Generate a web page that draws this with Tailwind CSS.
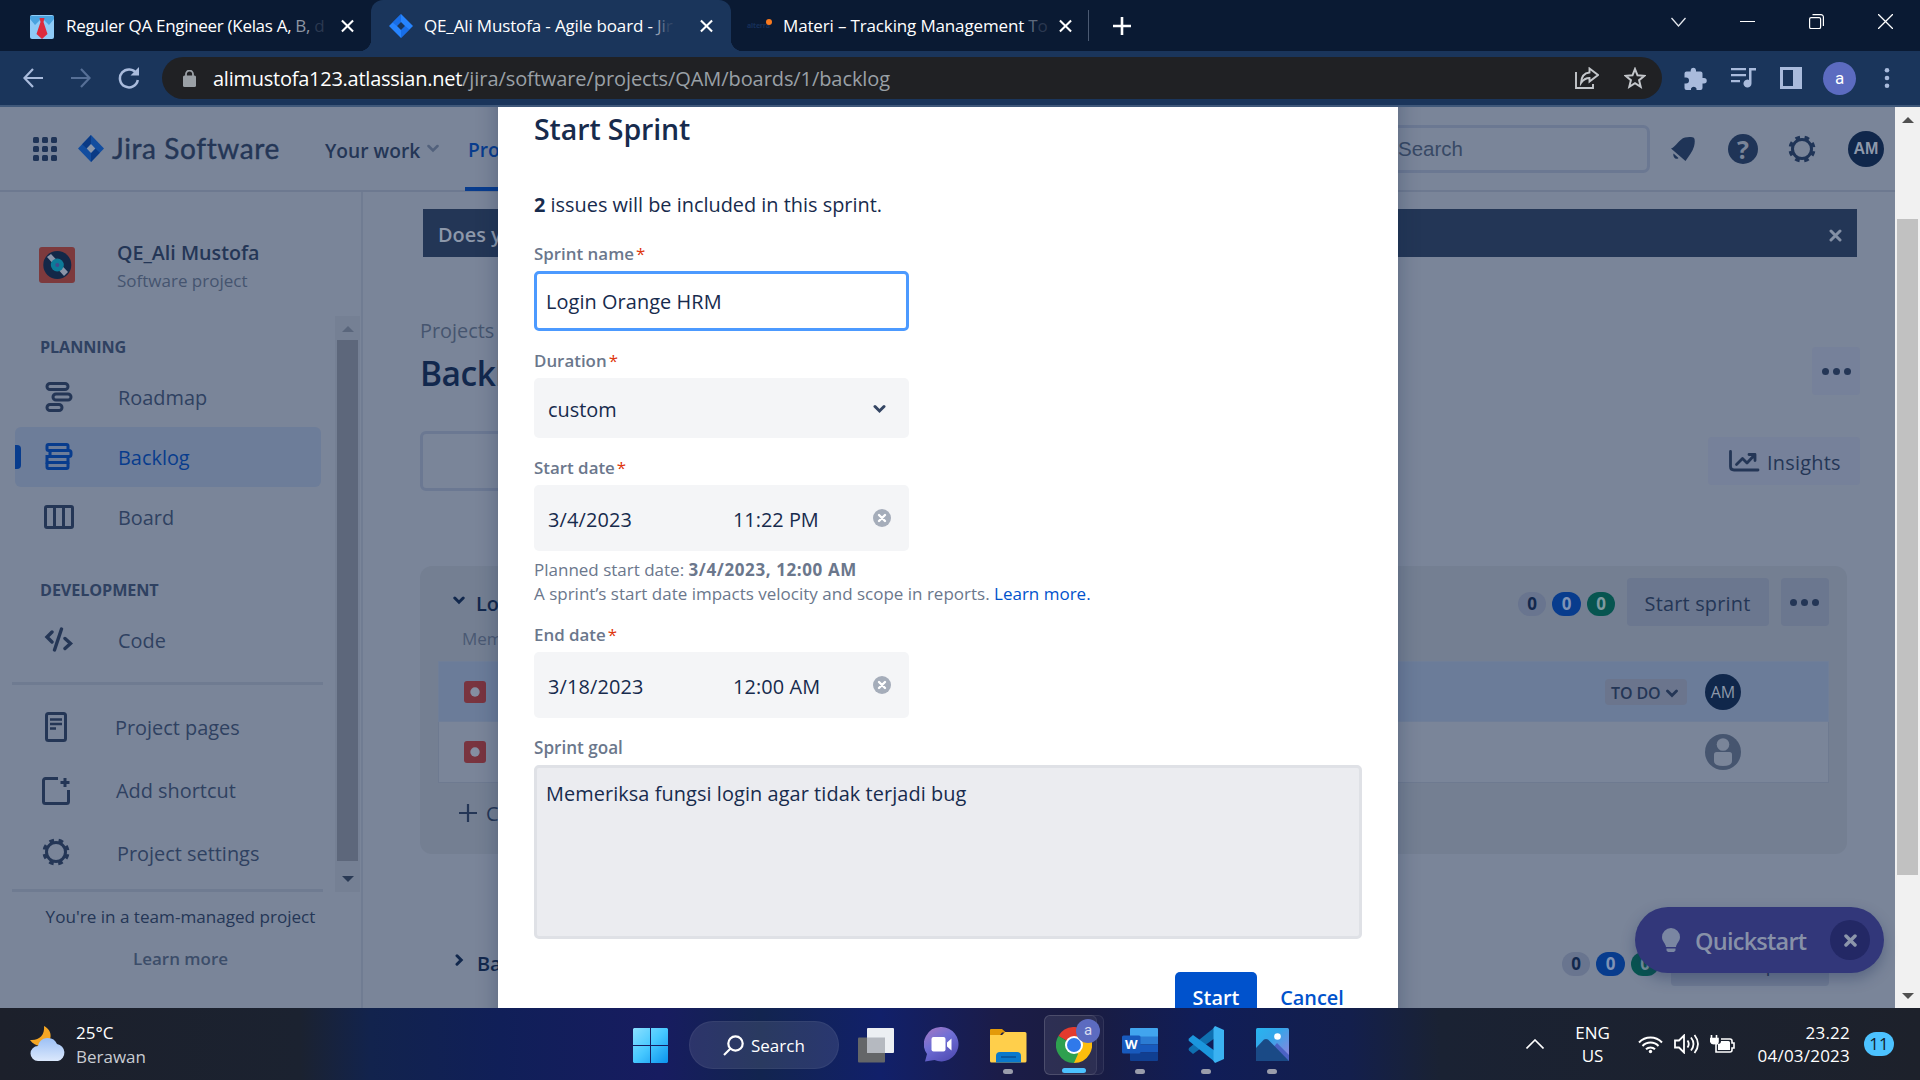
<!DOCTYPE html>
<html lang="en">
<head>
<meta charset="utf-8">
<title>QE_Ali Mustofa - Agile board - Jira</title>
<script src="https://cdn.jsdelivr.net/npm/@tailwindcss/browser@4"></script>
</head>
<body class="w-[1920px] h-[1080px] overflow-hidden font-['Open_Sans','Noto_Sans',sans-serif] text-[19.9px] leading-[24px] text-[#243656] whitespace-nowrap bg-[#7a8599]">
<div class="flex flex-col w-[1920px] h-[1080px] overflow-hidden">

<!-- tab strip -->
<header class="h-[51px] shrink-0 flex bg-[#0a1a33] text-white text-[17px]">
  <div class="w-[371px] flex items-center pl-[30px]">
    <svg class="w-6 h-6 mt-[2px]" viewBox="0 0 24 24"><rect width="24" height="24" rx="2" fill="#8fcbf7"/><path d="M0 1h24v3l-5 6-7-7-7 7-5-6z" fill="#4aa3df"/><path d="M9.500 3h5l-1 4 4 12-5.500 5-5.500-5 4-12z" fill="#dc2b3c"/></svg>
    <span class="ml-[12px] w-[263px] overflow-hidden tracking-[-0.3px]">Reguler QA Engineer (Kelas A, <span class="text-[#8d95a3]">B,</span> <span class="text-[#2b3850]">d</span></span>
    <svg class="w-[13px] h-[14px] ml-[12px]" viewBox="0 0 14 14" stroke="#fff" stroke-width="2.200"><path d="M1 1l12 12M13 1L1 13"/></svg>
  </div>
  <div class="w-[360px] flex items-center pl-[18px] bg-[#1a355b] rounded-t-xl relative">
    <i class="absolute -left-3 bottom-0 w-3 h-3 bg-[radial-gradient(circle_at_0_0,#0a1a33_12px,#1a355b_12.5px)]"></i>
    <i class="absolute -right-3 bottom-0 w-3 h-3 bg-[radial-gradient(circle_at_100%_0,#0a1a33_12px,#1a355b_12.5px)]"></i>
    <svg class="w-6 h-6" viewBox="0 0 24 24"><path d="M12 0l12 12-12 12L0 12z" fill="#2684ff"/><path d="M12 0v8l-4 4-4.500-3.500zM12 24v-8l4-4 4.500 3.500z" fill="#0f5fd8" opacity=".6"/><path d="M12 8l4 4-4 4-4-4z" fill="#1a355b"/></svg>
    <span class="ml-[11px] w-[265px] overflow-hidden tracking-[-0.15px]">QE_Ali Mustofa - Agile board - <span class="text-[#8f9db0]">J</span><span class="text-[#5a6f8c]">i</span><span class="text-[#34496a]">r</span></span>
    <svg class="w-[13px] h-[14px] ml-[11px]" viewBox="0 0 14 14" stroke="#fff" stroke-width="2.200"><path d="M1 1l12 12M13 1L1 13"/></svg>
  </div>
  <div class="w-[358px] flex items-center pl-[16px] border-r border-[#4b5a72] h-[31px] mt-[10px] relative">
    <span class="w-6 text-[7px] text-[#16305a] font-bold tracking-tight relative">alterra<i class="absolute left-[19px] top-[5px] w-[6px] h-[6px] rounded-full bg-[#f97a1f]"></i></span>
    <span class="ml-[12px] w-[265px] overflow-hidden tracking-[-0.15px]">Materi – Tracking Management <span class="text-[#5d697c]">T</span><span class="text-[#2b3850]">o</span></span>
    <svg class="w-[13px] h-[14px] ml-[11px]" viewBox="0 0 14 14" stroke="#fff" stroke-width="2.200"><path d="M1 1l12 12M13 1L1 13"/></svg>
  </div>
  <div class="flex-1 flex items-center">
    <svg class="w-[18px] h-[18px] ml-[24px]" viewBox="0 0 18 18" stroke="#fff" stroke-width="2.600"><path d="M9 0v18M0 9h18"/></svg>
    <div class="ml-auto flex items-center pr-[27px] gap-[54px] -mt-[8px]">
      <svg class="w-[15px] h-[10px]" viewBox="0 0 15 10" fill="none" stroke="#e5e8ee" stroke-width="1.300"><path d="M.5 1l7 8 7-8"/></svg>
      <svg class="w-[15px] h-[15px]" viewBox="0 0 15 15" stroke="#fff"><path d="M0 7.500h15"/></svg>
      <svg class="w-[15px] h-[15px]" viewBox="0 0 15 15" fill="none" stroke="#fff" stroke-width="1.200"><rect x=".6" y="3.600" width="11" height="11" rx="1.500"/><path d="M3.500.6H12a2.400 2.400 0 012.400 2.400v9"/></svg>
      <svg class="w-[15px] h-[15px]" viewBox="0 0 15 15" stroke="#fff" stroke-width="1.300"><path d="M0 0l15 15M15 0L0 15"/></svg>
    </div>
  </div>
</header>

<!-- address bar -->
<div class="h-[56px] shrink-0 flex items-center bg-[#1a355b] border-b-2 border-[#3f587a] pl-[23px]">
  <svg class="w-[20px] h-[20px]" viewBox="0 0 20 20" fill="none" stroke="#a9bbdc" stroke-width="2.200"><path d="M20 10H1.500M10 1L1.500 10l8.500 9"/></svg>
  <svg class="w-[20px] h-[20px] ml-[28px]" viewBox="0 0 20 20" fill="none" stroke="#566f96" stroke-width="2.200"><path d="M0 10h18.500M10 1l8.500 9-8.500 9"/></svg>
  <svg class="w-[22px] h-[22px] ml-[27px]" viewBox="0 0 22 22" fill="none" stroke="#a9bbdc" stroke-width="2.500"><path d="M18.500 6.500A9 9 0 1019.800 13"/><path d="M21 0v8.500h-8.500z" fill="#a9bbdc" stroke="none"/></svg>
  <div class="ml-[22px] w-[1500px] h-[42px] rounded-full bg-[#202124] flex items-center">
    <svg class="w-[13px] h-[17px] ml-[21px]" viewBox="0 0 13 17"><rect y="5.500" width="13" height="11.500" rx="1.500" fill="#9aa0a6"/><path d="M3 6V4a3.500 3.500 0 017 0v2" fill="none" stroke="#9aa0a6" stroke-width="1.800"/></svg>
    <span class="ml-[17px] mt-[2px] text-[#9aa0a6] text-[20px] tracking-[-0.08px]"><span class="text-white tracking-[-0.25px]">alimustofa123.atlassian.net</span>/jira/software/projects/QAM/boards/1/backlog</span>
    <svg class="w-[24px] h-[22px] ml-auto" viewBox="0 0 24 22" fill="none" stroke="#c4c7cb" stroke-width="1.900"><path d="M1 5v16h17v-4"/><path d="M14.500 1.500L23 8l-8.500 6.500V11C10 11 8 13 6 16c.3-6 3-10 8.500-10.500z"/></svg>
    <svg class="w-[22px] h-[22px] ml-[25px] mr-[16px]" viewBox="0 0 22 22" fill="none" stroke="#c4c7cb" stroke-width="2"><path d="M11 2l2.500 6.300 6.800.5-5.200 4.400 1.600 6.600L11 16.200l-5.700 3.600 1.600-6.600L1.700 8.800l6.800-.5z"/></svg>
  </div>
  <svg class="w-[23px] h-[23px] ml-[22px]" viewBox="0 0 23 23" fill="#a9bbdc"><path d="M20 11h-1.500V6.500a2 2 0 00-2-2H12V3a2.700 2.700 0 00-5.300 0v1.500H2.500a2 2 0 00-2 2v4H2a3 3 0 010 6H.5v4.500a2 2 0 002 2H7V21.500a3 3 0 015.500 0V23h4a2 2 0 002-2v-4.500H20A2.700 2.700 0 0020 11z"/></svg>
  <svg class="w-[25px] h-[20px] ml-[24px]" viewBox="0 0 25 20" fill="#a9bbdc"><path d="M0 0h15v2.300H0zM0 6h15v2.300H0zM0 12h9v2.300H0zM18 0h7v2.600h-4.500v13a4 4 0 11-2.500-3.700z"/></svg>
  <svg class="w-[22px] h-[22px] ml-[24px]" viewBox="0 0 22 22"><path d="M1.500 1.500h19v19h-19z" fill="none" stroke="#a9bbdc" stroke-width="3"/><path d="M13 1h8v20h-8z" fill="#a9bbdc"/></svg>
  <span class="w-[33px] h-[33px] rounded-full bg-[#5c6bc0] ml-[21px] text-white text-[17px] font-['Roboto'] flex items-center justify-center">a</span>
  <svg class="w-[6px] h-[20px] ml-[28px]" viewBox="0 0 6 20" fill="#a9bbdc"><circle cx="3" cy="2.300" r="2.300"/><circle cx="3" cy="10" r="2.300"/><circle cx="3" cy="17.700" r="2.300"/></svg>
</div>

<!-- page -->
<div class="h-[901px] shrink-0 flex relative overflow-hidden">
<div class="w-[1895px] flex flex-col bg-[#7a8599]">
  <nav class="h-[85px] shrink-0 border-b-2 border-[#6d7990] flex items-center pl-[33px] text-[#243656]">
    <svg class="w-6 h-6" viewBox="0 0 24 24" fill="#1f3457"><g id="r"><rect width="6" height="6" rx="1.500"/><rect x="9" width="6" height="6" rx="1.500"/><rect x="18" width="6" height="6" rx="1.500"/></g><use href="#r" y="9"/><use href="#r" y="18"/></svg>
    <svg class="w-[26px] h-[27px] ml-[21px]" viewBox="0 0 26 27"><path d="M13 0l13 13.500L13 27 0 13.500z" fill="#124d9f"/><path d="M13 0v9l-4.300 4.500-4.500-4.200zM13 27v-9l4.300-4.500 4.500 4.200z" fill="#0a3a85"/><path d="M13 9l4.300 4.500L13 18l-4.300-4.500z" fill="#8a96aa"/></svg>
    <span class="ml-[8px] w-[213px] text-[28px] font-['Lato'] tracking-[0.6px] -mt-[2px] [-webkit-text-stroke:0.4px_#243656]">Jira Software</span>
    <span class="w-[102px] font-semibold text-[19.2px] mt-[4px]">Your work</span>
    <svg class="w-[12px] h-[9px]" viewBox="0 0 12 9" fill="none" stroke="#52617c" stroke-width="2.500" stroke-linecap="round"><path d="M1.500 2L6 6.500 10.500 2"/></svg>
    <span class="ml-[26px] w-[33px] h-[84px] flex items-center border-b-4 border-[#083c8d] text-[#083c8d] font-semibold text-[19.2px] pl-[3px] pt-[7px]">Pro</span>
    <div class="ml-auto w-[300px] h-[48px] border-[3px] border-[#6b7892] rounded-[7px] flex items-center pl-[45px] text-[20.5px] font-['Liberation_Sans'] text-[#384965]">Search</div>
    <svg class="w-[26px] h-[26px] ml-[20px]" viewBox="0 0 26 26" fill="#1f3457"><path d="M1 12.500C6 11 9 3 15 1.500c4-1 8-.5 9 .5s1 4.500 0 8.500C22.500 16 19 19.500 15.500 25zM3.500 17.500l5 4.500c-2 2.300-6-.5-5-4.500z"/></svg>
    <span class="w-[30px] h-[30px] ml-[32px] rounded-full bg-[#1f3457] text-[#7a8599] font-bold text-[25px] flex items-center justify-center">?</span>
    <svg class="w-[28px] h-[28px] ml-[30px]" viewBox="0 0 28 28" fill="none" stroke="#1f3457"><circle cx="14" cy="14" r="9.500" stroke-width="3"/><circle cx="14" cy="14" r="12" stroke-width="3" stroke-dasharray="4.700 4.725" stroke-dashoffset="-2.300"/></svg>
    <span class="w-[36px] h-[36px] ml-[32px] mr-[11px] rounded-full bg-[#10274b] text-[#8d98aa] font-semibold text-[16px] font-['Liberation_Sans'] flex items-center justify-center">AM</span>
  </nav>

  <div class="flex flex-1 min-h-0">
    <!-- project sidebar -->
    <aside class="w-[363px] shrink-0 border-r-2 border-[#707c92] flex flex-col">
      <div class="h-[124px] flex pl-[39px] pt-[48px]">
        <svg class="w-9 h-9 mt-[7px]" viewBox="0 0 36 36"><rect width="36" height="36" rx="3" fill="#7d3a3d"/><circle cx="18.300" cy="18" r="14" fill="#132848"/><path d="M8 10l4-3 17 18-4 4z" fill="#8a94a8"/><circle cx="18.300" cy="18" r="6.500" fill="#0c7b99"/><circle cx="18.300" cy="18" r="2" fill="#424a8d"/></svg>
        <div class="ml-[42px]"><div class="font-semibold text-[19.7px] leading-[26px]">QE_Ali Mustofa</div><div class="text-[17px] leading-[29px] text-[#45546f]">Software project</div></div>
      </div>
      <div class="h-[576px] flex">
        <div class="w-[335px] flex flex-col text-[#2f4161]">
          <div class="pl-[40px] pt-[19px] h-[51px] font-bold text-[16.2px] tracking-[-0.1px]">PLANNING</div>
          <div class="h-[60px] flex items-center pl-[44px]">
            <svg class="w-[30px] h-[30px]" viewBox="0 0 30 30" fill="none" stroke="#243656" stroke-width="3"><rect x="3" y="1.500" width="21" height="6" rx="3"/><rect x="9" y="12" width="18" height="6" rx="3"/><rect x="3" y="22.500" width="15" height="6" rx="3"/></svg>
            <span class="ml-[44px] mt-[1px]">Roadmap</span></div>
          <div class="h-[60px] ml-[15px] w-[306px] rounded-md bg-[#6d7d99] flex items-center text-[#083c8d]">
            <i class="w-[6px] h-6 bg-[#083c8d] rounded-r-sm"></i>
            <svg class="w-[30px] h-[30px] ml-[23px]" viewBox="0 0 30 30" fill="none" stroke="#083c8d" stroke-width="3"><rect x="3" y="2.500" width="21" height="6" rx="1.500"/><rect x="6" y="8.500" width="21" height="6" rx="2"/><rect x="3" y="14.500" width="21" height="6"/><rect x="3" y="20.500" width="21" height="6" rx="1.500"/></svg>
            <span class="ml-[44px] mt-[1px]">Backlog</span></div>
          <div class="h-[60px] flex items-center pl-[44px]">
            <svg class="w-[30px] h-[24px]" viewBox="0 0 30 24" fill="none" stroke="#243656" stroke-width="3"><rect x="1.500" y="1.500" width="27" height="21" rx="1.500"/><path d="M10.500 1v22M19.500 1v22"/></svg>
            <span class="ml-[44px] mt-[1px]">Board</span></div>
          <div class="pl-[40px] pt-[31px] h-[63px] font-bold text-[16.2px] tracking-[-0.1px]">DEVELOPMENT</div>
          <div class="h-[60px] flex items-center pl-[44px]">
            <svg class="w-[30px] h-[26px]" viewBox="0 0 30 26" fill="none" stroke="#243656" stroke-width="3.400" stroke-linecap="round"><path d="M8 5L3 10l5 5M21 11.500l5.500 5-5.500 5M17.500 2l-7 21"/></svg>
            <span class="ml-[44px] mt-[1px]">Code</span></div>
          <div class="ml-[12px] w-[311px] mt-[12px] border-t-[3px] border-[#6f7b91]"></div>
          <div class="h-[83px] flex items-center pl-[44px]">
            <svg class="w-[24px] h-[30px]" viewBox="0 0 24 30" fill="none" stroke="#243656" stroke-width="3"><rect x="2.500" y="1.500" width="19" height="27" rx="2"/><path d="M6 7.500h12M6 12h12M6 16.500h6" stroke-width="2.500"/></svg>
            <span class="ml-[47px] mt-[3px]">Project pages</span></div>
          <div class="h-[45px] flex items-center pl-[42px]">
            <svg class="w-[28px] h-[28px]" viewBox="0 0 28 28" fill="none" stroke="#243656" stroke-width="3"><path d="M16 1.500H3.500a2 2 0 00-2 2v21a2 2 0 002 2h21a2 2 0 002-2V13"/><path d="M23 1v9M18.500 5.500h9"/></svg>
            <span class="ml-[46px] mt-[1px]">Add shortcut</span></div>
          <div class="h-[78px] flex items-center pl-[42px]">
            <svg class="w-[28px] h-[28px]" viewBox="0 0 28 28" fill="none" stroke="#243656"><circle cx="14" cy="14" r="9.500" stroke-width="3"/><circle cx="14" cy="14" r="12" stroke-width="3" stroke-dasharray="4.700 4.725" stroke-dashoffset="-2.300"/></svg>
            <span class="ml-[47px] mt-[4px]">Project settings</span></div>
        </div>
        <div class="w-[25px] bg-[#758094] flex flex-col items-center justify-between py-[10px]">
          <i class="border-x-[6px] border-x-transparent border-b-[6px] border-b-[#5a667c]"></i>
          <i class="w-[21px] h-[521px] bg-[#5d677b] -mt-[2px] mb-[5px]"></i>
          <i class="border-x-[6px] border-x-transparent border-t-[6px] border-t-[#2a3a55]"></i>
        </div>
      </div>
      <div class="ml-[12px] w-[311px] -mt-[3px] border-t-[3px] border-[#6f7b91]"></div>
      <div class="text-center text-[17.100px] text-[#243656] mt-[13px]">You're in a team-managed project</div>
      <div class="text-center text-[17px] font-semibold text-[#3c4d69] mt-[18px]">Learn more</div>
    </aside>

    <!-- backlog -->
    <main class="flex-1 pl-[57px]">
      <div class="mt-[17px] ml-[3px] w-[1434px] h-[48px] bg-[#233656] flex items-center justify-between pl-[15px] pr-[15px] text-[#8d98aa] font-semibold">
        <span class="mt-[3px]">Does y</span>
        <svg class="w-[13px] h-[13px] mt-[5px]" viewBox="0 0 13 13" stroke="#8490a5" stroke-width="3" stroke-linecap="round"><path d="M2 2l9 9M11 2l-9 9"/></svg>
      </div>
      <div class="mt-[62px] text-[#46556f]">Projects</div>
      <div class="flex justify-between w-[1440px] h-[52px] mt-[4px]">
        <h1 class="text-[33.500px] leading-[52px] font-semibold text-[#12284d] tracking-[-0.5px] w-[78px] overflow-hidden">Backl</h1>
        <span class="w-[48px] h-[48px] rounded bg-[#76819a] flex items-center justify-center gap-[4px]"><i class="w-[7px] h-[7px] rounded-full bg-[#243656]"></i><i class="w-[7px] h-[7px] rounded-full bg-[#243656]"></i><i class="w-[7px] h-[7px] rounded-full bg-[#243656]"></i></span>
      </div>
      <div class="flex justify-between w-[1440px] h-[60px] mt-[32px]">
        <div class="w-[240px] h-[60px] border-[3px] border-[#6b7892] rounded-md"></div>
        <div class="w-[152px] h-[48px] mt-[6px] rounded bg-[#76819a] flex items-center pl-[20px] font-medium">
          <svg class="w-[32px] h-[22px]" viewBox="0 0 32 22" fill="none" stroke="#243656" stroke-width="2.800" stroke-linecap="round" stroke-linejoin="round"><path d="M2.500 1.500v15q0 3.500 3.500 3.500h24"/><path d="M8.500 14.500l6-6 4.500 4.500 7.500-8M21 4.500h6v6"/></svg>
          <span class="ml-[7px] mt-[3px] tracking-[0.25px]">Insights</span></div>
      </div>

      <section class="mt-[75px] w-[1427px] h-[288px] rounded-xl bg-[#747f92] pl-[18px] pr-[18px] flex flex-col">
        <div class="flex mt-[12px] h-[48px] items-center">
          <svg class="w-[12px] h-[9px] ml-[15px] -mt-[4px]" viewBox="0 0 12 9" fill="none" stroke="#12284d" stroke-width="3" stroke-linecap="round"><path d="M1.800 2L6 6.200 10.200 2"/></svg>
          <span class="ml-[11px] mt-[3px] font-semibold text-[#12284d]">Lo</span>
          <div class="ml-auto flex items-center gap-[6px] text-[17px] leading-[24px] font-bold text-center mt-[3px]"><span class="w-[28px] h-6 rounded-full bg-[#69758f] text-[#12284d]">0</span><span class="w-[29px] h-6 rounded-full bg-[#083c8d] text-[#7f93b5]">0</span><span class="w-[28px] h-6 rounded-full bg-[#075550] text-[#7f9aa0]">0</span></div>
          <span class="ml-[12px] w-[142px] h-[48px] rounded bg-[#6b778f] font-medium flex items-center justify-center pt-[3px] tracking-[0.2px] pr-[1px]">Start sprint</span>
          <span class="ml-[12px] w-[48px] h-[48px] rounded bg-[#6b778f] flex items-center justify-center gap-[4px] pr-[1px]"><i class="w-[7px] h-[7px] rounded-full bg-[#243656]"></i><i class="w-[7px] h-[7px] rounded-full bg-[#243656]"></i><i class="w-[7px] h-[7px] rounded-full bg-[#243656]"></i></span>
        </div>
        <div class="ml-[24px] h-[35px] leading-[25px] text-[17px] text-[#4a5973]">Mem</div>
        <div class="h-[61px] bg-[#6b7c99] flex items-center pl-[25px] border border-[#6f7e98]">
          <svg class="w-[22px] h-[22px]" viewBox="0 0 22 22"><rect width="22" height="22" rx="3" fill="#79343f"/><circle cx="11" cy="11" r="4.700" fill="#858fa2"/></svg>
          <span class="ml-auto w-[82px] h-[26px] rounded bg-[#6b758d] text-[16px] font-semibold flex items-center pl-[6px] pt-[3px] tracking-[-0.1px]">TO DO<svg class="w-[12px] h-[9px] ml-[5px]" viewBox="0 0 12 9" fill="none" stroke="#243656" stroke-width="2.800" stroke-linecap="round"><path d="M1.500 2L6 6.500 10.500 2"/></svg></span>
          <span class="w-[36px] h-[36px] ml-[18px] mr-[87px] rounded-full bg-[#10274b] text-[#8d98aa] font-medium text-[16px] flex items-center justify-center">AM</span>
        </div>
        <div class="h-[61px] bg-[#7a8599] flex items-center justify-between pl-[25px] pr-[87px] border border-t-0 border-[#6e7a90]">
          <svg class="w-[22px] h-[22px]" viewBox="0 0 22 22"><rect width="22" height="22" rx="3" fill="#79343f"/><circle cx="11" cy="11" r="4.700" fill="#858fa2"/></svg>
          <svg class="w-[36px] h-[36px]" viewBox="0 0 36 36" fill="#7a8599"><circle cx="18" cy="18" r="18" fill="#46556f"/><circle cx="18" cy="10.500" r="6.300"/><path d="M11.500 18h13q2.500 0 2.500 2.500V27q0 5-9 5t-9-5v-6.500Q9 18 11.500 18z"/></svg>
        </div>
        <div class="flex items-center h-[60px] pl-[21px]">
          <svg class="w-[18px] h-[18px]" viewBox="0 0 18 18" stroke="#243656" stroke-width="2.200"><path d="M9 0v18M0 9h18"/></svg>
          <span class="ml-[9px] mt-[2px] font-medium">C</span></div>
      </section>
      <div class="w-[1409px] mt-[84px] h-[48px] flex items-center">
        <svg class="w-[9px] h-[12px] ml-[35px] -mt-[4px]" viewBox="0 0 9 12" fill="none" stroke="#12284d" stroke-width="3" stroke-linecap="round"><path d="M2 1.800L6.200 6 2 10.200"/></svg>
        <span class="ml-[13px] mt-[4px] font-semibold text-[#12284d] w-[21px] overflow-hidden">Ba</span>
        <div class="ml-auto flex items-center gap-[6px] text-[17px] leading-[24px] font-bold text-center mt-[3px]"><span class="w-[28px] h-6 rounded-full bg-[#69758f] text-[#12284d]">0</span><span class="w-[29px] h-6 rounded-full bg-[#083c8d] text-[#7f93b5]">0</span><span class="w-[28px] h-6 rounded-full bg-[#075550] text-[#7f9aa0]">0</span></div>
        <span class="ml-[12px] w-[158px] h-[48px] rounded bg-[#6d7991] font-medium flex items-center justify-center pt-[3px]">Create sprint</span>
      </div>
    </main>
  </div>
</div>

<!-- window scrollbar -->
<div class="w-[25px] bg-[#f1f1f1] flex flex-col items-center">
  <i class="mt-[10px] border-x-[6px] border-x-transparent border-b-[6px] border-b-[#505050]"></i>
  <i class="mt-[96px] w-[21px] h-[656px] bg-[#c1c1c1]"></i>
  <i class="mt-[118px] border-x-[6px] border-x-transparent border-t-[6px] border-t-[#505050]"></i>
</div>

<!-- quickstart pill -->
<div class="absolute left-[1635px] top-[800px] w-[249px] h-[66px] rounded-full bg-[#32377a] shadow-[0_6px_14px_rgba(30,45,90,0.35)] flex items-center pl-[27px] pr-[14px] text-[#8791a8]">
  <svg class="w-[18px] h-[24px]" viewBox="0 0 18 24" fill="#7a86a2"><path d="M9 0a9 9 0 019 9c0 4.500-3.500 6-4 10H4c-.5-4-4-5.500-4-10a9 9 0 019-9zM4.500 20.500h9v2l-1.500 1.500H6L4.500 22.500z"/></svg>
  <span class="ml-[15px] text-[23.500px] font-semibold tracking-[-0.75px] mt-[2px]">Quickstart</span>
  <span class="ml-auto w-[40px] h-[40px] rounded-full bg-[#232865] flex items-center justify-center"><svg class="w-[13px] h-[13px]" viewBox="0 0 13 13" stroke="#8c96ab" stroke-width="3.500" stroke-linecap="round"><path d="M2 2l9 9M11 2l-9 9"/></svg></span>
</div>

<!-- start sprint dialog -->
<div class="absolute left-[498px] top-[-60px] w-[900px] h-[1060px] bg-white text-[#172b4d] pt-[66px] px-[36px] shadow-[0_0_20px_rgba(9,30,66,0.3)]">
  <h2 class="h-[78px] text-[28.500px] leading-[32px] font-[550] tracking-[-0.1px]">Start Sprint</h2>
  <p class="h-[47px] leading-[28px] mt-0"><b>2</b> issues will be included in this sprint.</p>
  <div class="h-[33px] text-[16.9px] leading-[24px] pt-[4px] font-semibold text-[#6b778c]">Sprint name<span class="text-[#de350b] font-normal ml-[2px]">*</span></div>
  <div class="w-[375px] h-[60px] border-[3px] border-[#4c9aff] rounded-[5px] flex items-center pl-[9px] pt-[2px] tracking-[0.08px]">Login Orange HRM</div>
  <div class="h-[47px] text-[16.9px] leading-[24px] pt-[18px] font-semibold text-[#6b778c]">Duration<span class="text-[#de350b] font-normal ml-[2px]">*</span></div>
  <div class="w-[375px] h-[60px] bg-[#f4f5f7] rounded-[5px] flex items-center justify-between pl-[14px] pr-[23px]"><span class="mt-[3px]">custom</span>
    <svg class="w-[13px] h-[10px] mt-[1px]" viewBox="0 0 13 10" fill="none" stroke="#344563" stroke-width="3" stroke-linecap="round"><path d="M2 2.500l4.500 4.500L11 2.500"/></svg></div>
  <div class="h-[47px] text-[16.9px] leading-[24px] pt-[18px] font-semibold text-[#6b778c]">Start date<span class="text-[#de350b] font-normal ml-[2px]">*</span></div>
  <div class="w-[375px] h-[66px] bg-[#f4f5f7] rounded-[5px] flex items-center pl-[14px]"><span class="w-[185px] mt-[3px] tracking-[0.15px]">3/4/2023</span><span class="w-[140px] mt-[3px]">11:22 PM</span>
    <svg class="w-[18px] h-[18px]" viewBox="0 0 18 18"><circle cx="9" cy="9" r="9" fill="#a5adba"/><path d="M6 6l6 6M12 6l-6 6" stroke="#fff" stroke-width="2.400" stroke-linecap="round"/></svg></div>
  <div class="h-[68px] pt-[7px] text-[17px] leading-[24px] text-[#6b778c]"><div>Planned start date: <b class="tracking-[0.6px]">3/4/2023, 12:00 AM</b></div><div>A sprint’s start date impacts velocity and scope in reports. <a class="text-[#0052cc]">Learn more.</a></div></div>
  <div class="h-[33px] text-[16.9px] leading-[24px] pt-[4px] font-semibold text-[#6b778c]">End date<span class="text-[#de350b] font-normal ml-[2px]">*</span></div>
  <div class="w-[375px] h-[66px] bg-[#f4f5f7] rounded-[5px] flex items-center pl-[14px]"><span class="w-[185px] mt-[3px] tracking-[0.15px]">3/18/2023</span><span class="w-[140px] mt-[3px] tracking-[0.1px]">12:00 AM</span>
    <svg class="w-[18px] h-[18px]" viewBox="0 0 18 18"><circle cx="9" cy="9" r="9" fill="#a5adba"/><path d="M6 6l6 6M12 6l-6 6" stroke="#fff" stroke-width="2.400" stroke-linecap="round"/></svg></div>
  <div class="h-[47px] text-[17.100px] leading-[24px] pt-[18px] font-semibold text-[#6b778c]">Sprint goal</div>
  <div class="w-[828px] h-[174px] bg-[#ebecf0] border-[3px] border-[#dfe1e6] rounded-[5px] pl-[9px] pt-[14px] tracking-[0.08px]">Memeriksa fungsi login agar tidak terjadi bug</div>
  <div class="flex justify-end pt-[33px] pr-[19px]">
    <span class="w-[82px] h-[48px] bg-[#0052cc] rounded-[5px] text-white font-semibold flex items-center justify-center pt-[3px]">Start</span>
    <span class="ml-[24px] w-[62px] h-[48px] text-[#0052cc] font-[550] flex items-center justify-center pt-[3px]">Cancel</span>
  </div>
</div>
</div>

<!-- taskbar -->
<footer class="flex-1 relative flex items-center text-white text-[17px] leading-[24px] bg-[linear-gradient(90deg,#1c202b_0,#1b2230_300px,#12234d_370px,#101f58_500px,#171c60_660px,#12244f_760px,#11206a_880px,#1b1c48_1000px,#1a1c40_1080px,#101d58_1200px,#131f4c_1350px,#1a2233_1440px,#1d212b_1920px)]">
  <div class="w-[633px] flex items-center pl-[30px]">
    <svg class="w-[36px] h-[36px]" viewBox="0 0 36 36"><defs><linearGradient id="cl" x2="0" y2="1"><stop stop-color="#9cc0f5"/><stop offset="1" stop-color="#dbe8fc"/></linearGradient></defs><path d="M14 0c10 5 8 17-1 19.500-5 1-10-1-13-5.500C9 15 15 9 14 0z" fill="#f5a623"/><path d="M8 35a7.500 7.500 0 010-15 10 10 0 0119-2 8.700 8.700 0 011 17z" fill="url(#cl)"/></svg>
    <div class="ml-[10px] mt-[2px]"><div>25°C</div><div class="text-[#c9ccd2]">Berawan</div></div>
  </div>
  <svg class="w-[35px] h-[35px] mt-[3px]" viewBox="0 0 35 35"><defs><linearGradient id="w" x2="1" y2="1"><stop stop-color="#8be0ff"/><stop offset=".5" stop-color="#46c8ff"/><stop offset="1" stop-color="#0b93ee"/></linearGradient></defs><path d="M1 0h16v17H0V1zM18 0h16l1 1v16H18zM0 18h17v17H1l-1-1zM18 18h17v16l-1 1H18z" fill="url(#w)"/></svg>
  <div class="ml-[21px] w-[150px] h-[48px] mt-[2px] rounded-full bg-white/10 border border-white/5 flex items-center pl-[33px]">
    <svg class="w-[21px] h-[21px]" viewBox="0 0 21 21" fill="none" stroke="#fff" stroke-width="2.200"><circle cx="12.500" cy="8.500" r="7.200"/><path d="M7.500 13.500L1 20"/></svg>
    <span class="ml-[7px] mt-[1px]">Search</span></div>
  <svg class="w-[36px] h-[35px] ml-[19px] mt-[2px]" viewBox="0 0 36 35"><rect y="9.500" width="27" height="25" rx="1" fill="#646668"/><rect x="9" width="27" height="25" rx="1" fill="#eceff3"/><path d="M9 9.500h18V25H9z" fill="#b5b9c0"/></svg>
  <svg class="w-[35px] h-[35px] ml-[30px] mt-[1px]" viewBox="0 0 35 35"><defs><linearGradient id="t" x2=".6" y2="1"><stop stop-color="#a878c0"/><stop offset=".5" stop-color="#6f6fd6"/><stop offset="1" stop-color="#5450b8"/></linearGradient></defs><path d="M17.500 0a17.200 17.200 0 11-7 33L1 34.500 3 27A17.200 17.200 0 0117.500 0z" fill="url(#t)"/><rect x="7.500" y="10" width="14" height="14.500" rx="2" fill="#fff"/><path d="M23 15.500l4.500-4v12l-4.500-4z" fill="#fff"/></svg>
  <svg class="w-[37px] h-[34px] ml-[31px] mt-[3px]" viewBox="0 0 37 34"><path d="M0 1q0-1 1-1h11l4 3.500h-4L8 9H0z" fill="#e39a09"/><path d="M0 6h12l3-3h20q1.500 0 1.500 1.500V32q0 1.500-1.500 1.500H1.500Q0 33.500 0 32z" fill="#ffcf4b"/><path d="M6 33.500V27q0-4 4-4h17q4 0 4 4v6.500z" fill="#0b79cc"/><path d="M11 28h15" stroke="#0a4f94" stroke-width="1.500"/></svg>
  <div class="ml-[17px] w-[60px] h-[60px] mt-[2px] flex items-center pl-[12px] relative">
    <i class="absolute left-0 top-0 w-[60px] h-[60px] rounded-md bg-white/4 border border-white/8"></i>
    <i class="absolute left-0 top-0 w-[53px] h-[60px] rounded-md bg-white/5 border border-white/8"></i>
    <svg class="w-[36px] h-[36px] relative" viewBox="0 0 36 36"><path d="M18 18L2.400 9A18 18 0 0133.600 9z" fill="#e33b2e"/><path d="M18 18L33.600 9A18 18 0 0118 36z" fill="#fdbd0c"/><path d="M18 18l4 9-4 9A18 18 0 012.400 9z" fill="#2ea04f"/><path d="M18 9.500h15.800L35 13H18z" fill="#fdbd0c"/><circle cx="18" cy="18" r="9" fill="#fff"/><circle cx="18" cy="18" r="7" fill="#3079ea"/></svg>
    <span class="absolute left-[32px] top-[4px] w-6 h-6 rounded-full bg-[#5c6bc0] text-[15px] leading-[22px] text-center text-[#d9dcf0] font-['Roboto']">a</span>
    <i class="absolute left-[18px] top-[53px] w-6 h-[5px] rounded-full bg-[#4cc2ff]"></i>
  </div>
  <svg class="w-[36px] h-[33px] ml-[18px]" viewBox="0 0 36 33"><path d="M8 1q0-1 1-1h26q1 0 1 1v8H8z" fill="#41a5ee"/><path d="M8 8.500h28v8H8z" fill="#2b7cd3"/><path d="M8 16.500h28v8H8z" fill="#185abd"/><path d="M8 24.500h28V32q0 1-1 1H9q-1 0-1-1z" fill="#103f91"/><rect y="7.500" width="18.500" height="18" rx="1.500" fill="#185abd"/><text x="9.200" y="21" font-size="13" font-weight="700" fill="#fff" text-anchor="middle">W</text></svg>
  <svg class="w-[37px] h-[37px] ml-[30px]" viewBox="0 0 37 37"><path d="M27 1v11L5 28l-4-3.500q-1-1.500 0-2.500z" fill="#0f6fb0"/><path d="M27 36V25L5 9l-4 3.500q-1 1.500 0 2.500z" fill="#1b96dd"/><path d="M27 0l9 4v29l-9 4-1.500-2V2z" fill="#3bb2f2"/></svg>
  <svg class="w-[33px] h-[33px] ml-[31px]" viewBox="0 0 33 33"><defs><linearGradient id="p" x2="1" y2="1"><stop stop-color="#28b5f0"/><stop offset=".4" stop-color="#35a5ea"/><stop offset="1" stop-color="#9a80da"/></linearGradient></defs><rect width="33" height="33" rx="1.500" fill="url(#p)"/><path d="M15 22l6-7 12 12v6H15z" fill="#4b62c4"/><path d="M0 20l8-8.500q2-1 4 0L33 33H0z" fill="#1a4a86"/><circle cx="21.500" cy="8.500" r="3.300" fill="#fff"/></svg>
  <i class="absolute left-[1003px] top-[61px] w-[10px] h-[5px] rounded-full bg-[#9a9dab]"></i>
  <i class="absolute left-[1135px] top-[61px] w-[10px] h-[5px] rounded-full bg-[#9a9dab]"></i>
  <i class="absolute left-[1201px] top-[61px] w-[10px] h-[5px] rounded-full bg-[#9a9dab]"></i>
  <i class="absolute left-[1267px] top-[61px] w-[10px] h-[5px] rounded-full bg-[#9a9dab]"></i>
  <div class="ml-auto flex items-center pr-[26px]">
    <svg class="w-[18px] h-[10px]" viewBox="0 0 18 10" fill="none" stroke="#fff" stroke-width="1.600"><path d="M.5 9.500L9 1l8.500 8.500"/></svg>
    <div class="text-center leading-[23px] ml-[31px] w-[35px]">ENG<br>US</div>
    <svg class="w-[25px] h-[19px] ml-[28px]" viewBox="0 0 25 19" fill="none" stroke="#fff" stroke-width="2"><path d="M1 7.500a16 16 0 0123 0M4.500 11a11 11 0 0116 0M8 14.300a6.300 6.300 0 019 0"/><circle cx="12.500" cy="16.500" r="1.700" fill="#fff" stroke="none"/></svg>
    <svg class="w-[25px] h-[20px] ml-[11px]" viewBox="0 0 25 20" fill="none" stroke="#fff" stroke-width="1.800"><path d="M1 6.500h4l5-5v17l-5-5H1zM13.500 6.500q2.500 3.500 0 7M17 3.500q5 6.500 0 13M20.500 1q7 9 0 18"/></svg>
    <svg class="w-[25px] h-[19px] ml-[11px]" viewBox="0 0 25 19"><path d="M1.500 0v4M6.500 0v4" stroke="#fff" stroke-width="1.600"/><path d="M0 3.500h8V7q0 2-2 2.500V17h14q2 0 2-2v-2h2V8h-2V6q0-2-2-2h-9" fill="none" stroke="#fff" stroke-width="1.600"/><path d="M0 3.500h8V7q-1 2.500-4 2.500T0 7zM8 9q3 0 3-3h7.500q1.500 0 1.500 1.500V15H8z" fill="#fff"/></svg>
    <div class="text-right leading-[23px] w-[115px] tracking-[0.22px] -mt-[1px]">23.22<br>04/03/2023</div>
    <span class="ml-[14px] w-[30px] h-[24px] rounded-full bg-[#4cc2ff] text-[#12202e] text-[17px] leading-[24px] text-center">11</span>
  </div>
</footer>
</div>
</body>
</html>
